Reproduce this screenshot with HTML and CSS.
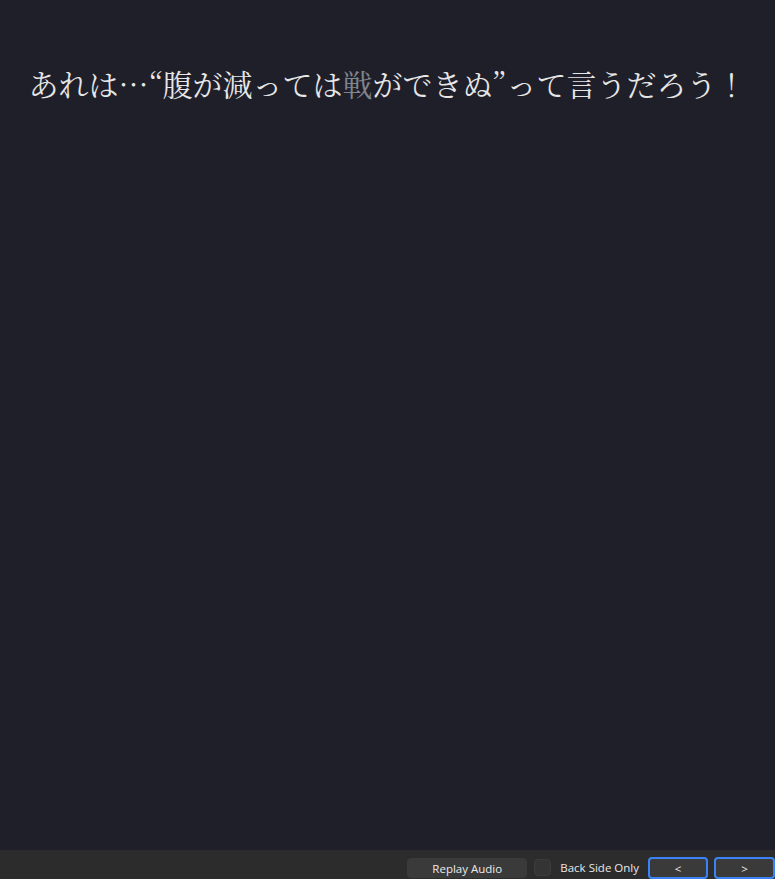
FILE: index.html
```html
<!DOCTYPE html>
<html lang="ja">
<head>
<meta charset="utf-8">
<link rel="stylesheet" href="styles.css">
</head>
<body>
<div class="app">
  <main class="card">
    <p class="sentence">あれは…“腹が減っては<span class="dim">戦</span>ができぬ”って言うだろう！</p>
  </main>
  <footer class="toolbar">
    <button class="btn replay">Replay Audio</button>
    <label class="check"><span class="box"></span>Back Side Only</label>
    <button class="btn nav">&lt;</button>
    <button class="btn nav">&gt;</button>
  </footer>
</div>
</body>
</html>
```
FILE: styles.css
```css
html, body {
  margin: 0;
  padding: 0;
  height: 100%;
  background: #1f1f2a;
}
.app {
  display: flex;
  flex-direction: column;
  height: 879px;
}
.card {
  flex: 1;
  padding-top: 59px;
}
.sentence {
  margin: 0;
  text-align: center;
  color: #e6e6e6;
  font-family: "Noto Serif CJK JP", "Liberation Serif", "Noto Sans CJK JP", serif;
  font-size: 30px;
  line-height: 48px;
}
.dim { color: #80848c; }
.toolbar {
  height: 29px;
  background: #2c2c2c;
  display: flex;
  justify-content: flex-end;
  align-items: flex-start;
  padding-top: 7px;
  box-sizing: border-box;
  overflow: hidden;
  font-family: "Open Sans", "Noto Sans", sans-serif;
  font-size: 11.5px;
  color: #e8e8e8;
}
.btn {
  box-sizing: border-box;
  background: #3a3a3a;
  color: #eaeaea;
  font: inherit;
  border-radius: 4px;
  padding: 0;
  display: flex;
  align-items: center;
  justify-content: center;
}
.replay {
  width: 120px;
  height: 20px;
  margin-top: 1px;
  border: 1px solid #3a3a3a;
}
.check {
  display: flex;
  align-items: center;
  height: 19px;
  margin-top: 1px;
  margin-left: 7px;
  margin-right: 9px;
}
.box {
  width: 17px;
  height: 17px;
  box-sizing: border-box;
  background: #343434;
  border: 1px solid #3c3c3c;
  border-radius: 4px;
  margin-right: 9px;
}
.nav {
  width: 60px;
  height: 22px;
  border: 2px solid #3b82f6;
  margin-right: 6px;
}
.nav:last-child { margin-right: 0; width: 61px; }
```
